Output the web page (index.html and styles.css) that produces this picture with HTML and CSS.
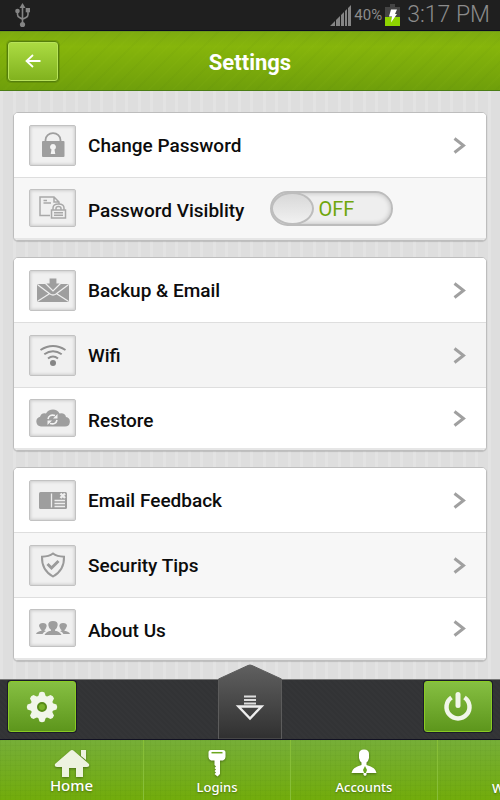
FILE: index.html
```html
<!DOCTYPE html>
<html lang="en">
<head>
<meta charset="utf-8">
<meta name="viewport" content="width=device-width, initial-scale=1">
<title>Settings</title>
<link rel="stylesheet" href="styles.css">
</head>
<body>
<div class="status">
  <svg class="usb" width="16" height="26" viewBox="0 0 16 26" aria-hidden="true">
    <g fill="none" stroke="#858585" stroke-width="1.6"><path d="M7.500 4v18M2.500 9v3.500q0 2 2 3l3 1.700M13 8v4.500q0 2-2 3l-3.500 1.700"/></g>
    <g fill="#858585"><path d="M7.500 1l3 5h-6z"/><circle cx="2.500" cy="9" r="2.300"/><path d="M10.700 6h4.300v4.300h-4.300z"/><circle cx="7.500" cy="22.500" r="2.600"/></g>
  </svg>
  <svg class="signal" width="21" height="21" viewBox="0 0 21 21" aria-hidden="true">
    <path d="M0 21L5 16v5zM6 15l4-4v10H6zM11 10l3-3v14h-3zM15 6l2-2v17h-2zM18 3l3-3v21h-3z" fill="#858585"/>
  </svg>
  <span class="percent">40%</span>
  <svg class="battery" width="15" height="22" viewBox="0 0 15 22" aria-hidden="true">
    <path d="M5 0h5v3h5v10H0V3h5z" fill="#444"/><path d="M0 13h15v9H0z" fill="#8fd400"/><path d="M6 5.500h6l-2 4.500h2L6 18.500l1-6H4z" fill="#fff"/>
  </svg>
  <span class="clock">3:17 PM</span>
</div>
<header class="header">
  <button class="back" type="button" aria-label="Back">
    <svg width="16" height="14" viewBox="0 0 16 14" fill="none" stroke="#fff" stroke-width="1.800" aria-hidden="true"><path d="M15.500 7H1.500M8 1L1.500 7L8 13"/></svg>
  </button>
  <h1 class="title">Settings</h1>
</header>
<main class="content">
  <section class="card">
    <a class="row" href="#">
      <span class="tile"><svg width="24" height="26" viewBox="0 0 24 26" aria-hidden="true"><path d="M4.500 9.500V8a7.500 6.800 0 0 1 15 0v1.500" fill="none" stroke="#9e9e9e" stroke-width="1.800"/><rect x="1" y="9" width="22.500" height="16" rx="1" fill="#9e9e9e"/><path d="M12 12a3 3 0 0 1 1.500 5.600l.8 4.400h-4.600l.8-4.400A3 3 0 0 1 12 12z" fill="#f4f4f4"/></svg></span>
      <span class="label">Change Password</span>
      <svg class="chevron" width="13" height="17" viewBox="0 0 13 17" aria-hidden="true"><path d="M1.500 1.500l9 7-9 7"/></svg>
    </a>
    <div class="row">
      <span class="tile"><svg width="28" height="24" viewBox="0 0 28 24" fill="none" stroke="#a8a8a8" stroke-width="1.500" aria-hidden="true"><path d="M11 19.500H1V1h14l5 5v2M15 1v5h5M4.500 4.500H8M4.500 7H12"/><rect x="12.500" y="14" width="14" height="8" fill="#eee"/><path d="M14 14v-2q0-4 5.500-4t5.500 4v2M17 14v-1.500q0-2 2.500-2t2.500 2V14M15 16.700h9M15 19.300h9"/></svg></span>
      <label class="label" for="visibility">Password Visiblity</label>
      <span class="switch"><input class="switch-input" id="visibility" type="checkbox" role="switch"><span class="knob"></span><span class="switch-text">OFF</span></span>
    </div>
  </section>
  <section class="card">
    <a class="row" href="#">
      <span class="tile"><svg width="32" height="26" viewBox="0 0 32 26" aria-hidden="true"><rect x="0" y="7" width="32" height="18" rx="2" fill="#9e9e9e"/><path d="M1 8l12 9q3 2 6 0L31 8M1 24l11-7M31 24l-11-7" fill="none" stroke="#eee" stroke-width="1.300"/><path d="M12 1h8v5h4l-8 8-8-8h4z" fill="#9e9e9e" stroke="#eee" stroke-width="1.200"/></svg></span>
      <span class="label">Backup &amp; Email</span>
      <svg class="chevron" width="13" height="17" viewBox="0 0 13 17" aria-hidden="true"><path d="M1.500 1.500l9 7-9 7"/></svg>
    </a>
    <a class="row pressed" href="#">
      <span class="tile"><svg width="28" height="24" viewBox="0 0 28 24" aria-hidden="true"><g fill="none" stroke="#909090" stroke-width="2"><path d="M1.500 7Q14-1 26.500 7M5.300 11.300q8.700-6 17.400 0M9 15.500q5-4 10 0"/></g><circle cx="14" cy="20" r="3" fill="#858585"/></svg></span>
      <span class="label">Wifi</span>
      <svg class="chevron" width="13" height="17" viewBox="0 0 13 17" aria-hidden="true"><path d="M1.500 1.500l9 7-9 7"/></svg>
    </a>
    <a class="row" href="#">
      <span class="tile"><svg width="34" height="18" viewBox="0 0 34 18" aria-hidden="true"><path d="M5 17.500a5 5 0 0 1-1-9.800Q5.500 3.500 10 4.500C12.500-.5 21-1 23.500 4.500q5.500-1 6.500 3.500a4.800 4.800 0 0 1-1 9.500z" fill="#9e9e9e"/><path d="M12 10q1-5 7-3.500M21 11q-1 5-7 3.500" fill="none" stroke="#f2f2f2" stroke-width="1.600"/><path d="M21.500 5v4.500H17zM11.500 16v-4.500H16z" fill="#f2f2f2"/></svg></span>
      <span class="label">Restore</span>
      <svg class="chevron" width="13" height="17" viewBox="0 0 13 17" aria-hidden="true"><path d="M1.500 1.500l9 7-9 7"/></svg>
    </a>
  </section>
  <section class="card">
    <a class="row" href="#">
      <span class="tile"><svg width="28" height="17" viewBox="0 0 28 17" aria-hidden="true"><rect width="28" height="17" rx="1.500" fill="#9e9e9e"/><path d="M12.500 1.500v14M15.500 8.500H26M15.500 11.500H26M15.500 14.500H26" stroke="#eee" stroke-width="1.300"/><path d="M21.500 1.500l4.500 4.500M26 1.500l-4.500 4.500" stroke="#eee" stroke-width="2.400"/></svg></span>
      <span class="label">Email Feedback</span>
      <svg class="chevron" width="13" height="17" viewBox="0 0 13 17" aria-hidden="true"><path d="M1.500 1.500l9 7-9 7"/></svg>
    </a>
    <a class="row" href="#">
      <span class="tile"><svg width="26" height="26" viewBox="0 0 26 26" fill="none" stroke="#9a9a9a" aria-hidden="true"><path d="M13 1.500q4 3 11 3.200Q24.500 18 13 24.500 1.500 18 2 4.700 9 4.500 13 1.500z" stroke-width="2"/><path d="M7.500 12l4 4 7-7" stroke-width="3"/></svg></span>
      <span class="label">Security Tips</span>
      <svg class="chevron" width="13" height="17" viewBox="0 0 13 17" aria-hidden="true"><path d="M1.500 1.500l9 7-9 7"/></svg>
    </a>
    <a class="row" href="#">
      <span class="tile"><svg width="34" height="14" viewBox="0 0 34 14" fill="#9e9e9e" aria-hidden="true"><path d="M12.300 4q-.2-4 4.700-4t4.700 4l-.7 2.500q-.7 1.500-2 2.300v1q5 .7 6.500 4.200h-17q1.500-3.500 6.500-4.200v-1q-1.300-.8-2-2.300z"/><path d="M3 5q0-3 4-3 3.500 0 3.700 3l-.7 2q-.5 1.300-1.500 2v.8L10 10q-2.500 1-3.500 3H0q1-2.500 5.500-3.200V9q-1-.7-1.500-2zM31 5q0-3-4-3-3.500 0-3.700 3l.7 2q.5 1.300 1.500 2v.8L24 10q2.500 1 3.500 3H34q-1-2.500-5.500-3.200V9q1-.7 1.500-2z"/></svg></span>
      <span class="label">About Us</span>
      <svg class="chevron" width="13" height="17" viewBox="0 0 13 17" aria-hidden="true"><path d="M1.500 1.500l9 7-9 7"/></svg>
    </a>
  </section>
</main>
<div class="toolbar">
  <button class="tool" type="button" aria-label="Settings">
    <svg width="32" height="32" viewBox="-16 -16 32 32" aria-hidden="true"><g fill="#f1f6e9"><circle r="11.500"/><path id="tooth" d="M-4-10l1.500-4.500q2.500-1.500 5 0L4-10z"/><use href="#tooth" transform="rotate(45)"/><use href="#tooth" transform="rotate(90)"/><use href="#tooth" transform="rotate(135)"/><use href="#tooth" transform="rotate(180)"/><use href="#tooth" transform="rotate(225)"/><use href="#tooth" transform="rotate(270)"/><use href="#tooth" transform="rotate(315)"/></g><circle r="4" fill="#79b329" stroke="#578c17" stroke-width="2"/></svg>
  </button>
  <button class="drawer" type="button" aria-label="Close menu">
    <svg width="66" height="75" viewBox="0 0 66 75" aria-hidden="true">
      <defs><linearGradient id="drawer-fill" x2="0" y2="1"><stop stop-color="#606060"/><stop offset="1" stop-color="#303030"/></linearGradient></defs>
      <path d="M1.500 75V15L31 1.500q2-1 4 0L64.500 15v60z" fill="url(#drawer-fill)" stroke="#5c5c5c"/>
      <path d="M27 32.500h12M27 36h12M27 39.500h12" stroke="#ddd" stroke-width="2"/>
      <path d="M21.500 42.500h23L33 54.500z" fill="none" stroke="#eee" stroke-width="2.400"/>
    </svg>
  </button>
  <button class="tool" type="button" aria-label="Log out">
    <svg width="30" height="32" viewBox="0 0 30 32" fill="none" stroke="#f1f6e9" aria-hidden="true"><path d="M8.500 6.500a11.500 11.500 0 1 0 13 0" stroke-width="4.500"/><path d="M15 3.500v11" stroke-width="5" stroke-linecap="round"/></svg>
  </button>
</div>
<nav class="tabs">
  <a class="tab home" href="#">
    <svg width="36" height="28" viewBox="0 0 36 28" fill="#edf3df" aria-hidden="true"><path d="M27 1h5v10l-5-4zM16 2q2-2 4 0l15 13q1 3-2 3h-4v10h-7v-9h-7v9H8V18H3q-3 0-2-3z"/></svg>
    Home
  </a>
  <a class="tab" href="#">
    <svg width="18" height="28" viewBox="0 0 18 28" aria-hidden="true"><path d="M3 1h12q2.500 0 2.500 2.500V8q0 2.500-2.500 3.500h-3V25l-2.500 2.500L6.500 25l1.500-1.500-1.500-1.500L8 20.500 6.500 19 8 17.500 6.500 16v-4.500H3Q.5 10.500.5 8V3.500Q.5 1 3 1z" fill="#fff"/><path d="M3.500 3.700h11" stroke="#6ba61f" stroke-width="1.500"/></svg>
    Logins
  </a>
  <a class="tab" href="#">
    <svg width="26" height="28" viewBox="0 0 26 28" aria-hidden="true"><path d="M8 5q0-4.500 5-4.500T18 5v4q-.5 3-2.500 4.500V16Q25 18.500 25.500 24H.5Q1 18.500 10.500 16v-2.500Q8.500 12 8 9z" fill="#fff"/><path d="M14 17l2 4-1.500 4h-1L12 21z" fill="#6ba61f"/><path d="M12.500 24h3v2l-1.500 1-1.500-1z" fill="#fff"/></svg>
    Accounts
  </a>
  <a class="tab more" href="#">W</a>
</nav>
</body>
</html>
```
FILE: styles.css
```css
* { box-sizing: border-box; }

body {
  margin: 0;
  min-height: 100vh;
  display: flex;
  flex-direction: column;
  overflow-x: hidden;
  font-family: Roboto, "Liberation Sans", sans-serif;
  background: repeating-linear-gradient(90deg, #e3e3e3 0 3px, #dedede 3px 13px, #e3e3e3 13px 16px, #dedede 16px 25px);
}

button { padding: 0; border: 0; background: none; }
a { color: inherit; text-decoration: none; }

.status {
  height: 31px;
  padding: 0 10px 0 15px;
  display: flex;
  align-items: center;
  color: #8c8c8c;
  background: #1f1f1f;
  border-bottom: 1px solid #0b0b22;
}
.signal { margin-left: auto; }
.percent { margin: 0 3px; font-size: 15px; line-height: 30px; }
.clock { margin-left: 7px; font-size: 23px; line-height: 30px; font-weight: 300; }

.header {
  height: 60px;
  padding: 0 7px;
  display: grid;
  grid-template-columns: 52px 1fr 52px;
  align-items: center;
  border-top: 1px solid #6f9a17;
  border-bottom: 1px solid #4b7d16;
  background:
    repeating-linear-gradient(135deg, rgba(50, 90, 0, .03) 0 2px, transparent 2px 9px, rgba(180, 220, 40, .03) 9px 11px, transparent 11px 17px),
    linear-gradient(#7dab10, #86b50b 25%, #6f9f0b);
}
.back {
  height: 41px;
  display: grid;
  place-items: center;
  border: 1px solid #557f0b;
  border-radius: 4px;
  background: linear-gradient(#acdc43, #80b11d);
  box-shadow: inset 0 0 0 1px #b7e259, 0 0 0 1px rgba(60, 95, 0, .25);
}
.title {
  margin: 0;
  padding-top: 4px;
  color: #fff;
  font-size: 22px;
  font-weight: 700;
  line-height: 28px;
  text-align: center;
}

.content {
  flex: 1;
  padding: 21px 13px 18px;
  display: flex;
  flex-direction: column;
  gap: 16px;
}
.card {
  border: 1px solid #bdbdbd;
  border-radius: 5px;
  background: #fff;
  overflow: hidden;
  box-shadow: 0 1px 1px rgba(0, 0, 0, .15);
}
.row {
  height: 65px;
  padding: 0 20px 0 15px;
  display: flex;
  align-items: center;
  border-bottom: 1px solid #dedede;
  background: #fff;
}
.row:nth-child(2) { background: #f7f7f7; }
.row.pressed { background: #f4f4f4; }
.row:last-child {
  height: 62px;
  border-bottom: 2px solid #e6e6e6;
}
.tile {
  width: 47px;
  height: 41px;
  margin-right: 12px;
  display: grid;
  place-items: center;
  border: 1px solid #c2c2c2;
  border-radius: 2px;
  background: #f0f0f0;
  box-shadow: inset 0 0 3px 1px rgba(0, 0, 0, .14);
}
.row:last-child .tile { height: 38px; }
.label {
  padding-top: 2px;
  color: #0c0c0c;
  font-size: 19px;
  font-weight: 500;
  line-height: 24px;
}
.row:last-child .label { padding-top: 6px; }
.chevron {
  margin-left: auto;
  fill: none;
  stroke: #a0a0a0;
  stroke-width: 3;
}

.switch {
  position: relative;
  width: 123px;
  height: 35px;
  margin-left: 26px;
  display: flex;
  align-items: center;
  border: 2px solid #bcbcbc;
  border-radius: 18px;
  background: #eee;
  box-shadow: inset 0 0 5px rgba(0, 0, 0, .22);
}
.switch-input {
  position: absolute;
  inset: 0;
  width: 100%;
  height: 100%;
  margin: 0;
  opacity: 0;
}
.knob {
  width: 43px;
  height: 33px;
  margin-left: -1px;
  border: 2px solid #bdbdbd;
  border-radius: 50%;
  background: linear-gradient(#d8d8d8, #f1f1f1);
}
.switch-text {
  padding-top: 2px;
  margin-left: 4px;
  color: #70a60b;
  font-size: 20px;
  line-height: 24px;
}

.toolbar {
  height: 61px;
  padding: 1px 8px 7px;
  display: flex;
  align-items: center;
  justify-content: space-between;
  border-top: 1px solid #777;
  border-bottom: 1px solid #111122;
  background: repeating-linear-gradient(45deg, #343537 0 2px, #323335 2px 4px);
}
.tool {
  width: 68px;
  height: 51px;
  display: grid;
  place-items: center;
  border: 1px solid #8acb23;
  border-radius: 3px;
  background: linear-gradient(#86bf42, #5d961c);
  box-shadow: 0 0 0 1px #1a1b29;
}
.drawer {
  height: 75px;
  align-self: flex-end;
  margin-bottom: -7px;
}
.drawer svg { display: block; }

.tabs {
  height: 60px;
  display: grid;
  grid-template-columns: 144fr 147fr 147fr 62fr;
  overflow: hidden;
  color: #fff;
  font-family: "Noto Sans", "Open Sans", sans-serif;
  font-size: 13px;
  font-weight: 500;
  line-height: 16px;
  background:
    repeating-linear-gradient(90deg, rgba(50, 100, 0, .05) 0 1px, transparent 1px 5px),
    repeating-linear-gradient(rgba(50, 100, 0, .05) 0 1px, transparent 1px 5px),
    linear-gradient(#76ae38, #72ac0b);
}
.tab {
  min-width: 0;
  padding-top: 9px;
  display: flex;
  flex-direction: column;
  align-items: center;
  gap: 2px;
  border-right: 1px solid #87be37;
  text-shadow: 0 1px 2px rgba(0, 0, 0, .35);
}
.tab svg { filter: drop-shadow(0 1px 1px rgba(0, 0, 0, .35)); }
.tab.home { font-size: 15px; gap: 0; }
.tab.more {
  padding-top: 40px;
  padding-left: 54px;
  align-items: flex-start;
  border-right: 0;
}
```
